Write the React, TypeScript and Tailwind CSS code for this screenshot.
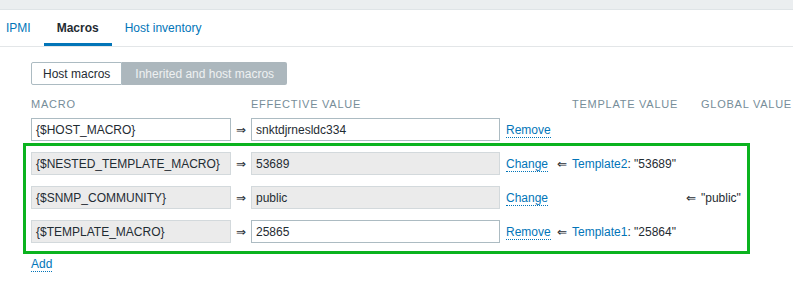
import type { ReactNode } from "react";

type Row = {
  macro: string;
  value: string;
  inherited: boolean;
  valueLocked: boolean;
  action: string;
  template?: { name: string; value: string };
  global?: string;
};

const ROWS: Row[] = [
  { macro: "{$NESTED_TEMPLATE_MACRO}", value: "53689", inherited: true, valueLocked: true, action: "Change", template: { name: "Template2", value: "53689" } },
  { macro: "{$SNMP_COMMUNITY}", value: "public", inherited: true, valueLocked: true, action: "Change", global: "public" },
  { macro: "{$TEMPLATE_MACRO}", value: "25865", inherited: true, valueLocked: false, action: "Remove", template: { name: "Template1", value: "25864" } },
];

function Link({ children }: { children: ReactNode }) {
  return (
    <span className="text-[#0275b8] border-b border-dotted border-[#0275b8] leading-[14px] cursor-pointer">{children}</span>
  );
}

function Field({ text, readonly, width }: { text: string; readonly: boolean; width: string }) {
  return (
    <div
      className={`${width} h-[23px] flex items-center px-[4px] border ${
        readonly ? "bg-[#ebebeb] border-[#d3d9dc]" : "bg-white border-[#acbbc2]"
      }`}
    >
      {text}
    </div>
  );
}

function MacroRow({ row }: { row: Row }) {
  return (
    <div className="flex items-center h-[23px]">
      <Field text={row.macro} readonly={row.inherited} width="w-[200px]" />
      <div className="w-[20px] text-center">⇒</div>
      <Field text={row.value} readonly={row.valueLocked} width="w-[249px]" />
      <div className="w-[57px] pl-[6px]">
        <Link>{row.action}</Link>
      </div>
      <div className="w-[15px]">{row.template ? "⇐" : ""}</div>
      <div className="w-[114px] whitespace-nowrap">
        {row.template && (
          <>
            <span className="text-[#0275b8]">{row.template.name}</span>: "{row.template.value}"
          </>
        )}
      </div>
      <div className="w-[15px]">{row.global ? "⇐" : ""}</div>
      <div className="whitespace-nowrap">{row.global ? `"${row.global}"` : ""}</div>
    </div>
  );
}

export default function App() {
  const tabs = ["IPMI", "Macros", "Host inventory"];
  return (
    <div className="w-[793px] h-[284px] overflow-hidden bg-white text-[12px] text-[#1f2c33] font-['Liberation_Sans',Arial,sans-serif]">
      <div className="h-[10px] bg-[#ebeef0] border-b border-[#dfe4e7]" />
      <div className="h-[37px] flex border-b border-[#e3e6e8] ml-[-7px]">
        {tabs.map((t) => (
          <div
            key={t}
            className={`h-[36px] px-[13px] flex items-center pt-[2px] border-b-[3px] ${
              t === "Macros" ? "border-[#0275b8] font-bold text-[#1f2c33]" : "border-transparent text-[#0275b8]"
            }`}
          >
            {t}
          </div>
        ))}
      </div>

      <div className="pl-[31px] pt-[15px]">
        <div className="flex h-[23px]">
          <div className="pl-[11px] pr-[11px] flex items-center bg-white border border-[#acbbc2] rounded-l-[2px]">Host macros</div>
          <div className="px-[13px] flex items-center bg-[#acb7bd] text-[#eef1f2] rounded-r-[2px]">
            Inherited and host macros
          </div>
        </div>

        <div className="flex mt-[12px] h-[14px] leading-[14px] text-[11px] tracking-[0.75px] text-[#768d99]">
          <div className="w-[220px]">MACRO</div>
          <div className="w-[321px]">EFFECTIVE VALUE</div>
          <div className="w-[129px]">TEMPLATE VALUE</div>
          <div className="whitespace-nowrap">GLOBAL VALUE</div>
        </div>

        <div className="mt-[7px]">
          <MacroRow
            row={{ macro: "{$HOST_MACRO}", value: "snktdjrnesldc334", inherited: false, valueLocked: false, action: "Remove" }}
          />
        </div>

        <div className="mt-[2px] ml-[-8px] w-[727px] border-[3px] border-[#0bb31f] pl-[5px] pt-[6px] pb-[8px] flex flex-col gap-[11px]">
          {ROWS.map((r) => (
            <MacroRow key={r.macro} row={r} />
          ))}
        </div>

        <div className="mt-[1px]">
          <Link>Add</Link>
        </div>
      </div>
    </div>
  );
}
